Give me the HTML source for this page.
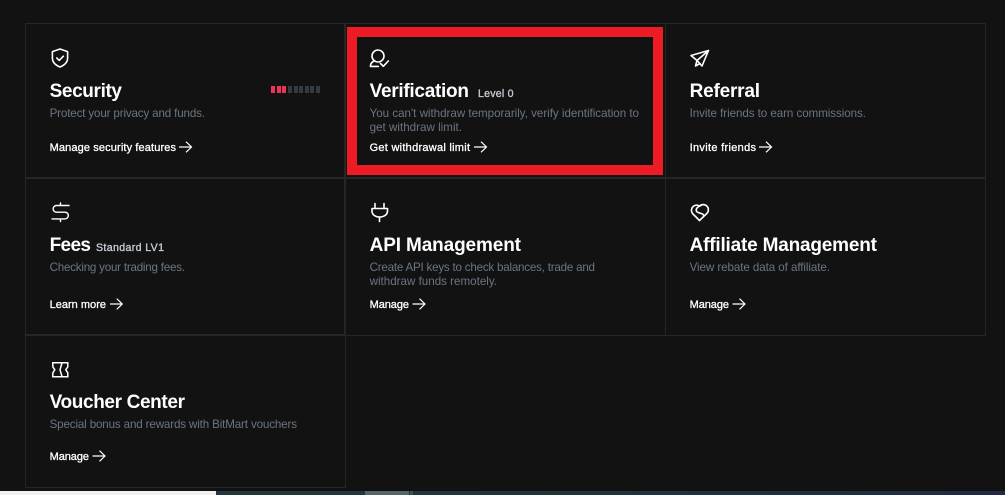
<!DOCTYPE html>
<html lang="en">
<head>
<meta charset="utf-8">
<title>Account</title>
<style>
html,body{margin:0;padding:0;background:#121212;width:1005px;height:495px;overflow:hidden}
svg{display:block}
text{font-family:"Liberation Sans",sans-serif}
.t{font-size:19px;font-weight:700;fill:#fff}
.d{font-size:11.6px;fill:#6b7682}
.l{font-size:11px;font-weight:400;fill:#fff;stroke:#fff;stroke-width:.3px}
.s{font-size:10.6px;font-weight:400;fill:#c3cad1;stroke:#c3cad1;stroke-width:.35px}
.i{fill:none;stroke:#fff;stroke-width:1.6;stroke-linecap:round;stroke-linejoin:round}
.a{fill:none;stroke:#fff;stroke-width:1.2}
.b{fill:#262626}
</style>
</head>
<body>
<svg width="1005" height="495" viewBox="0 0 1005 495" xmlns="http://www.w3.org/2000/svg">
<defs>
<linearGradient id="g" x1="0" x2="1" y1="0" y2="0"><stop offset="0" stop-color="#22383f"/><stop offset=".5" stop-color="#1f333c"/><stop offset="1" stop-color="#1f2a44"/></linearGradient>
</defs>
<rect width="1005" height="495" fill="#121212"/>
<g shape-rendering="crispEdges">
<rect class="b" x="25" y="23" width="961" height="1"/>
<rect class="b" x="25" y="177" width="961" height="2"/>
<rect class="b" x="25" y="334" width="321" height="2"/>
<rect class="b" x="346" y="335" width="640" height="1"/>
<rect class="b" x="25" y="487" width="321" height="1"/>
<rect class="b" x="25" y="23" width="1" height="465"/>
<rect class="b" x="344" y="23" width="2" height="312"/>
<rect class="b" x="345" y="335" width="1" height="153"/>
<rect class="b" x="665" y="23" width="1" height="312"/>
<rect class="b" x="985" y="23" width="1" height="312"/>
<rect x="347" y="27" width="316" height="148" fill="#ed1c24"/>
<rect x="357" y="37" width="296" height="128" fill="#121212"/>
<rect x="271" y="86" width="4" height="7" fill="#f0325a"/>
<rect x="277" y="86" width="4" height="7" fill="#f0325a"/>
<rect x="282" y="86" width="4" height="7" fill="#f0325a"/>
<rect x="288" y="86" width="4" height="7" fill="#323a42"/>
<rect x="294" y="86" width="4" height="7" fill="#323a42"/>
<rect x="299" y="86" width="4" height="7" fill="#323a42"/>
<rect x="305" y="86" width="4" height="7" fill="#323a42"/>
<rect x="310" y="86" width="4" height="7" fill="#323a42"/>
<rect x="316" y="86" width="4" height="7" fill="#323a42"/>
<rect x="0" y="491" width="216" height="4" fill="#f0f0f0"/>
<rect x="216" y="491" width="789" height="4" fill="url(#g)"/>
<rect x="365" y="491" width="44" height="4" fill="#55656b"/>
<rect x="410" y="491" width="3" height="4" fill="#3d5056"/>
</g>

<!-- Security -->
<path class="i" d="M60 49l7.600 2.600v6.600c0 4.200-3 6.800-7.600 8.800c-4.600-2-7.600-4.600-7.600-8.800v-6.600z"/>
<path class="i" d="M56.800 58l2.400 2.400l4.200-4.200"/>
<text class="t" x="49.600" y="97" textLength="72.400" lengthAdjust="spacing">Security</text>
<text class="d" x="49.600" y="117" textLength="155.400" lengthAdjust="spacing">Protect your privacy and funds.</text>
<text class="l" x="49.600" y="151" textLength="126.400" lengthAdjust="spacing">Manage security features</text>
<path class="a" d="M179 147h12.500M186 141.700l5.500 5.300l-5.500 5.300"/>

<!-- Verification -->
<circle class="i" cx="378" cy="56" r="6"/>
<path class="i" d="M374 61c-2 1-3.600 2.400-3.600 5.400h8"/>
<path class="i" d="M380.500 63.500l2.800 2.800l5-5.300"/>
<text class="t" x="369.600" y="97" textLength="99.400" lengthAdjust="spacing">Verification</text>
<text class="s" x="478" y="97" textLength="35.500" lengthAdjust="spacing">Level 0</text>
<text class="d" x="369.600" y="117" textLength="269.400" lengthAdjust="spacing">You can't withdraw temporarily, verify identification to</text>
<text class="d" x="369.600" y="131" textLength="92.400" lengthAdjust="spacing">get withdraw limit.</text>
<text class="l" x="369.600" y="151" textLength="100.400" lengthAdjust="spacing">Get withdrawal limit</text>
<path class="a" d="M474 147h12.500M481 141.700l5.500 5.300l-5.500 5.300"/>

<!-- Referral -->
<path class="i" d="M691 55.500L708.500 50.500L702 66L697 60.500ZM708 51L697 60.500L695.500 66L700 63.500"/>
<text class="t" x="689.600" y="97" textLength="70.400" lengthAdjust="spacing">Referral</text>
<text class="d" x="689.600" y="117" textLength="176.400" lengthAdjust="spacing">Invite friends to earn commissions.</text>
<text class="l" x="689.600" y="151" textLength="66.400" lengthAdjust="spacing">Invite friends</text>
<path class="a" d="M759 147h12.500M766 141.700l5.500 5.300l-5.500 5.300"/>

<!-- Fees -->
<path class="i" style="stroke-width:1.4" d="M69 205.500H56.500a3.200 3.200 0 0 0 0 6.700H65a3.200 3.200 0 0 1 0 6.700H52M60.500 203v2.500M60.500 219v2.500"/>
<text class="t" x="49.600" y="251" textLength="41.400" lengthAdjust="spacing">Fees</text>
<text class="s" x="96" y="251" textLength="68" lengthAdjust="spacing">Standard LV1</text>
<text class="d" x="49.600" y="271" textLength="135.400" lengthAdjust="spacing">Checking your trading fees.</text>
<text class="l" x="49.600" y="308" textLength="56.400" lengthAdjust="spacing">Learn more</text>
<path class="a" d="M110 304h12M116.800 298.700l5.400 5.300l-5.400 5.300"/>

<!-- API -->
<path class="i" d="M375 203.500v5M384 203.500v5M372 208.500h15.500v2.500c0 3.600-3.400 6-7.800 6s-7.700-2.400-7.700-6zM379.500 217v4.500"/>
<text class="t" x="369.600" y="251" textLength="151.400" lengthAdjust="spacing">API Management</text>
<text class="d" x="369.600" y="271" textLength="225.400" lengthAdjust="spacing">Create API keys to check balances, trade and</text>
<text class="d" x="369.600" y="285" textLength="127.400" lengthAdjust="spacing">withdraw funds remotely.</text>
<text class="l" x="369.600" y="308" textLength="39.400" lengthAdjust="spacing">Manage</text>
<path class="a" d="M412.500 304h12.500M419.500 298.700l5.500 5.300l-5.500 5.300"/>

<!-- Affiliate -->
<path class="i" d="M699.500 220.500L692.500 213.500a5.200 5.200 0 0 1 7-7.500a5.200 5.200 0 0 1 7.300 7.500Z"/>
<path class="i" d="M701 205.500c-3.500 1-5.500 3.500-4.500 5.800c.8 1.900 6.500 1.700 7 3.800"/>
<text class="t" x="689.600" y="251" textLength="187.400" lengthAdjust="spacing">Affiliate Management</text>
<text class="d" x="689.600" y="271" textLength="140.400" lengthAdjust="spacing">View rebate data of affiliate.</text>
<text class="l" x="689.600" y="308" textLength="39.400" lengthAdjust="spacing">Manage</text>
<path class="a" d="M732.500 304h12.500M739.500 298.700l5.500 5.300l-5.500 5.300"/>

<!-- Voucher -->
<path d="M52.800 362.800H67.800V366.800L65.800 369.800L67.800 372.800V376.800H52.800V372.800L54.800 369.800L52.800 366.800Z" fill="none" stroke="#fff" stroke-width="1.500" stroke-linejoin="miter"/>
<path d="M62 363L60 369.800L62 376.500" fill="none" stroke="#fff" stroke-width="1.500"/>
<text class="t" x="49.600" y="408" textLength="135.400" lengthAdjust="spacing">Voucher Center</text>
<text class="d" x="49.600" y="428" textLength="247.400" lengthAdjust="spacing">Special bonus and rewards with BitMart vouchers</text>
<text class="l" x="49.600" y="460" textLength="39.400" lengthAdjust="spacing">Manage</text>
<path class="a" d="M92.500 456h12.500M99.500 450.700l5.500 5.300l-5.500 5.300"/>
</svg>
</body>
</html>
